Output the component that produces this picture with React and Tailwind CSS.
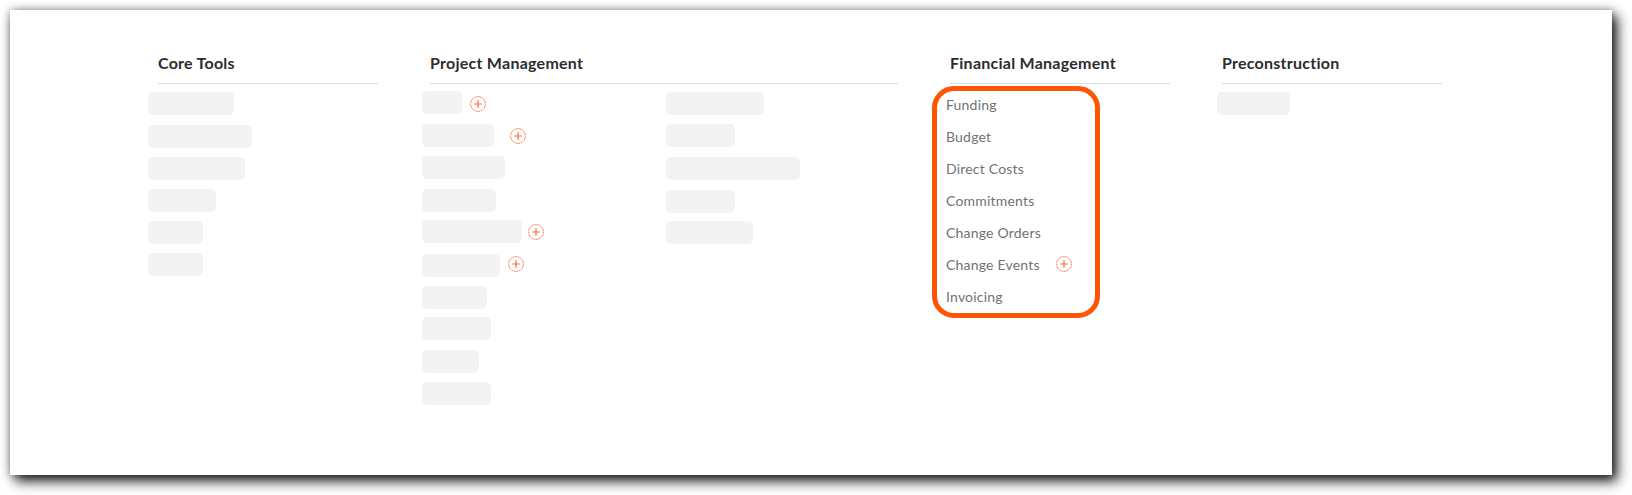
const coreRows = [
  "w-[86px] mt-[8px]",
  "w-[104px] mt-[10px]",
  "w-[97px] mt-[9px]",
  "w-[68px] mt-[9px]",
  "w-[55px] mt-[9px]",
  "w-[55px] mt-[9px]",
];

const projectLeft = [
  { row: "mt-[7px]", bar: "w-[40px]", gap: "ml-[8px] mt-[3px]", add: true },
  { row: "mt-[10px]", bar: "w-[72px]", gap: "ml-[16px] mt-[1px]", add: true },
  { row: "mt-[9px]", bar: "w-[83px]" },
  { row: "mt-[10px]", bar: "w-[74px]" },
  { row: "mt-[8px]", bar: "w-[100px]", gap: "ml-[6px] mt-[1px]", add: true },
  { row: "mt-[11px]", bar: "w-[78px]", gap: "ml-[8px] mb-[3px]", add: true },
  { row: "mt-[9px]", bar: "w-[65px]" },
  { row: "mt-[8px]", bar: "w-[69px]" },
  { row: "mt-[10px]", bar: "w-[57px]" },
  { row: "mt-[9px]", bar: "w-[69px]" },
];

const projectRight = [
  "w-[98px] mt-[8px]",
  "w-[69px] mt-[9px]",
  "w-[134px] mt-[10px]",
  "w-[69px] mt-[10px]",
  "w-[87px] mt-[8px]",
];

const financial = ["Funding", "Budget", "Direct Costs", "Commitments", "Change Orders", "Change Events", "Invoicing"];

function AddIcon() {
  return (
    <svg width="16" height="16" viewBox="0 0 16 16" fill="none" stroke="#ff6a33" className="block shrink-0">
      <circle cx="8" cy="8" r="7.4" strokeWidth="0.9" strokeDasharray="1.8 0.6" />
      <path d="M8 4.2v7.6M4.2 8h7.6" strokeWidth="1.2" />
    </svg>
  );
}

function Bar({ className }) {
  return <div className={`h-[23px] rounded-[5px] bg-[#f3f3f3] ${className}`} />;
}

function Heading({ children }) {
  return (
    <div className="h-[74px] flex items-end border-b border-[#dedede] pb-[10px] text-[16px] leading-[20px] font-bold tracking-[0.25px] text-[#2a2d2f]">
      {children}
    </div>
  );
}

export default function App() {
  return (
    <div className="w-[1632px] h-[495px] bg-white pt-[10px] pl-[10px] overflow-hidden font-['Lato',sans-serif]">
      <div className="w-[1602px] h-[465px] bg-white shadow-[5px_6px_12px_rgba(0,0,0,0.9),0_0_8px_rgba(0,0,0,0.35)] flex gap-[52px] pl-[148px]">
        <section className="w-[220px]">
          <Heading>Core Tools</Heading>
          <div className="-ml-[10px]">
            {coreRows.map((c, i) => (
              <Bar key={i} className={c} />
            ))}
          </div>
        </section>

        <section className="w-[468px]">
          <Heading>Project Management</Heading>
          <div className="flex -ml-[8px]">
            <div className="w-[244px]">
              {projectLeft.map((r, i) => (
                <div key={i} className={`flex items-center ${r.row}`}>
                  <Bar className={r.bar} />
                  {r.add && (
                    <span className={r.gap}>
                      <AddIcon />
                    </span>
                  )}
                </div>
              ))}
            </div>
            <div>
              {projectRight.map((c, i) => (
                <Bar key={i} className={c} />
              ))}
            </div>
          </div>
        </section>

        <section className="w-[220px]">
          <Heading>Financial Management</Heading>
          <div className="relative -ml-[4px] mt-[4px]">
            <div className="absolute -left-[14px] top-[-2px] w-[168px] h-[232px] border-[5px] border-[#ff5500] rounded-[22px]" />
            {financial.map((name) => (
              <div key={name} className="h-[32px] flex items-center text-[14px] tracking-[0.2px] text-[#6f7375]">
                {name}
                {name === "Change Events" && (
                  <span className="ml-[16px]">
                    <AddIcon />
                  </span>
                )}
              </div>
            ))}
          </div>
        </section>

        <section className="w-[220px]">
          <Heading>Preconstruction</Heading>
          <div className="-ml-[5px] mt-[8px]">
            <Bar className="w-[73px]" />
          </div>
        </section>
      </div>
    </div>
  );
}
